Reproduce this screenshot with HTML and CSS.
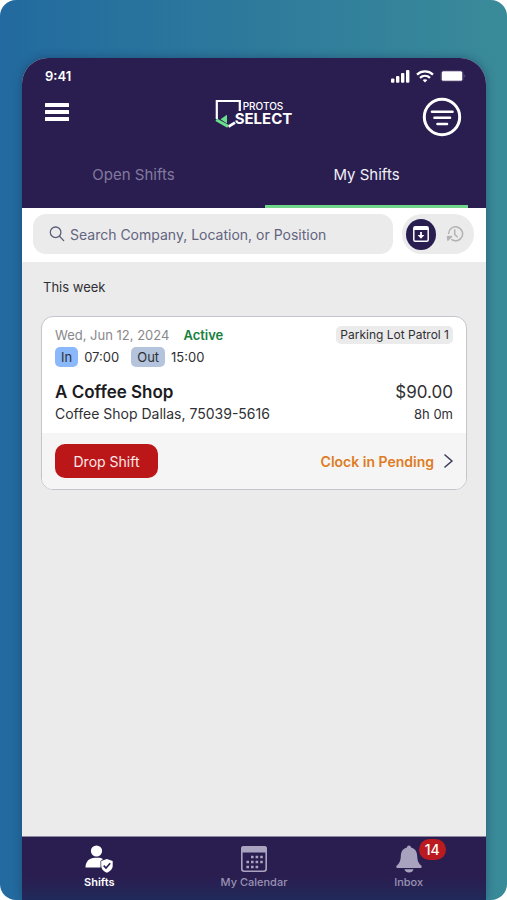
FILE: index.html
```html
<!DOCTYPE html>
<html lang="en">
<head>
<meta charset="utf-8">
<meta name="viewport" content="width=device-width, initial-scale=1">
<title>Protos Select – My Shifts</title>
<link rel="stylesheet" href="styles.css">
</head>
<body>
<div class="stage">
  <div class="phone">
    <header class="header">
      <div class="status">
        <span>9:41</span>
        <div class="status-icons">
          <svg width="19" height="13" viewBox="0 0 19 13" fill="#fff" aria-hidden="true"><rect x="0" y="8.500" width="3.400" height="4.300" rx="1"/><rect x="5" y="6" width="3.400" height="6.800" rx="1"/><rect x="10" y="3" width="3.400" height="9.800" rx="1"/><rect x="15" y="0" width="3.400" height="12.800" rx="1"/></svg>
          <svg width="18" height="13" viewBox="0 0 18 13" fill="none" stroke="#fff" stroke-width="2.300" aria-hidden="true"><path d="M1 4.600C5.500.4 12.500.4 17 4.600"/><path d="M4 7.800c2.900-2.600 7.100-2.600 10 0"/><path d="M6.600 10 9 12.600 11.400 10C10 8.900 8 8.900 6.600 10z" fill="#fff" stroke="none"/></svg>
          <svg width="26" height="12" viewBox="0 0 26 12" aria-hidden="true"><rect x=".5" y=".5" width="23" height="11" rx="3" fill="none" stroke="#3f3462"/><rect x="1.700" y="1.300" width="20.600" height="9.400" rx="1.500" fill="#fff"/><path d="M24.600 4.300q1.200 1.700 0 3.400z" fill="#8d87a1"/></svg>
        </div>
      </div>
      <div class="brand-bar">
        <button class="icon-button" aria-label="Menu"><svg width="24" height="18" viewBox="0 0 24 18" fill="#fff"><rect width="24" height="4" rx=".5"/><rect y="7" width="24" height="4" rx=".5"/><rect y="14" width="24" height="4" rx=".5"/></svg></button>
        <div class="brand">
          <svg width="26" height="30" viewBox="0 0 26 30" fill="none" aria-hidden="true"><path d="M1.800 20V2h23V12" stroke="#fff" stroke-width="2.200"/><path d="M13.500 27.600l6.500-4" stroke="#fff" stroke-width="2.800"/><path d="M1.200 20.800 13 27.400" stroke="#6be08c" stroke-width="3"/><path d="M12 15.800v8.600L5.500 20.200z" fill="#6be08c"/></svg>
          <div class="brand-name"><span class="brand-top">PROTOS</span><span class="brand-main">SELECT</span></div>
        </div>
        <button class="icon-button" aria-label="Filter"><svg width="40" height="40" viewBox="0 0 40 40" fill="none" stroke="#fff"><circle cx="20" cy="20" r="17.700" stroke-width="3"/><g stroke-width="2.600" stroke-linecap="round"><path d="M10 14.700h20.500M12.500 20.800h15.500M15.500 27h9.500"/></g></svg></button>
      </div>
      <nav class="tabs" aria-label="Shift lists">
        <a class="tab" href="#open">Open Shifts</a>
        <a class="tab tab-active" href="#mine" aria-current="page">My Shifts</a>
      </nav>
    </header>

    <div class="toolbar">
      <label class="search">
        <svg width="16" height="16" viewBox="0 0 16 16" fill="none" stroke="#5b5f78" stroke-width="1.300" stroke-linecap="round" aria-hidden="true"><circle cx="6.600" cy="6.300" r="5.300"/><path d="M10.500 10.300l4.200 4.300"/></svg>
        <input type="search" aria-label="Search shifts" placeholder="Search Company, Location, or Position">
      </label>
      <div class="view-switch">
        <button class="view view-active" aria-label="Upcoming"><svg width="16" height="16" viewBox="0 0 16 16" fill="none" stroke="#fff" stroke-width="1.500"><rect x=".8" y=".8" width="14.400" height="14.400" rx="1.500"/><path d="M1 2.500h14" stroke-width="3"/><path d="M8 6v4" stroke-width="1.800"/><path d="M4.600 8.900h6.800L8 12.700z" fill="#fff" stroke="none"/></svg></button>
        <button class="view" aria-label="History"><svg width="18" height="18" viewBox="0 0 18 18" fill="none" stroke="#b1b1b3" stroke-width="1.500" stroke-linecap="round" stroke-linejoin="round"><path d="M2.600 8.500a7 7 0 1 1 3.200 6.200"/><path d="M8.700 5v4.500l2.500 2.200"/><path d="M1.600 11.400h4.600l-4.200 4z" fill="#b1b1b3" stroke-width="1"/></svg></button>
      </div>
    </div>

    <main class="content">
      <h2 class="section-title">This week</h2>
      <article class="card">
        <div class="card-body">
          <div class="row">
            <div class="date-status"><span class="date">Wed, Jun 12, 2024</span><span class="active">Active</span></div>
            <span class="position">Parking Lot Patrol 1</span>
          </div>
          <div class="times">
            <span class="pill pill-in">In</span><span class="time">07:00</span>
            <span class="pill pill-out">Out</span><span class="time">15:00</span>
          </div>
          <div class="row headline"><h3 class="place">A Coffee Shop</h3><span class="pay">$90.00</span></div>
          <div class="row detail"><span class="address">Coffee Shop Dallas, 75039-5616</span><span>8h 0m</span></div>
        </div>
        <div class="card-footer">
          <button class="drop">Drop Shift</button>
          <a class="pending" href="#clock-in">Clock in Pending<svg width="9" height="14" viewBox="0 0 9 14" fill="none" stroke="#3c3c5c" stroke-width="1.600" stroke-linecap="round" stroke-linejoin="round" aria-hidden="true"><path d="M1 1l7 6-7 6"/></svg></a>
        </div>
      </article>
    </main>

    <nav class="bottom-nav" aria-label="Main">
      <a class="nav-item nav-current" href="#shifts" aria-current="page">
        <svg width="28" height="28" viewBox="0 0 28 28" fill="#fff" aria-hidden="true"><circle cx="11.500" cy="6" r="5.600"/><path d="M.5 22.500c0-6 4-9.700 9.500-9.700h3c2 0 3.700.5 5 1.300l-2.500 2v6.400z"/><path d="M21.800 14l5.900 2.100v4.600c0 3.200-2.600 5.600-5.900 7-3.300-1.400-5.600-3.800-5.600-7v-4.600z"/><path d="M18.700 20.600l2.300 2.500 4.200-4.800" fill="none" stroke="#2a1e50" stroke-width="1.600"/></svg>
        <span>Shifts</span>
      </a>
      <a class="nav-item" href="#calendar">
        <svg width="28" height="28" viewBox="0 0 28 28" aria-hidden="true"><rect x="1.800" y="1.800" width="24.400" height="24.400" rx="2.500" fill="none" stroke="#aaa4c0" stroke-width="1.600"/><path d="M1 7.500V4q0-3 3-3h20q3 0 3 3v3.500z" fill="#aaa4c0"/><g stroke="#aaa4c0" stroke-width="2.600" stroke-dasharray="2.600 2"><path d="M11 12h11.800M6.400 17h16.400M6.400 22h11.800"/></g></svg>
        <span>My Calendar</span>
      </a>
      <a class="nav-item" href="#inbox">
        <span class="bell"><svg width="28" height="28" viewBox="0 0 28 28" fill="#a8a2be" aria-hidden="true"><path d="M14 .5c1.200 0 2 .8 2 2 4.300 1 6 4.200 6.200 8.500.2 5 1.300 7.200 4 9.500 1 1 .6 2.500-.8 2.500H2.600c-1.400 0-1.800-1.500-.8-2.500 2.700-2.300 3.800-4.500 4-9.500C6 6.700 7.700 3.500 12 2.500c0-1.200.8-2 2-2z"/><path d="M9.500 24.300h9c-.6 2.100-2.300 3.200-4.500 3.200s-3.900-1.100-4.500-3.200z"/></svg><span class="badge">14</span></span>
        <span>Inbox</span>
      </a>
    </nav>
  </div>
</div>
</body>
</html>
```
FILE: styles.css
```css
* { box-sizing: border-box; }

body {
  margin: 0;
  background: #fff;
  font-family: Inter, "Liberation Sans", sans-serif;
  font-size: 13px;
  color: #303034;
}

button { border: 0; padding: 0; background: none; font: inherit; cursor: pointer; }
a { color: inherit; text-decoration: none; }
svg { display: block; flex: none; }
h2, h3 { margin: 0; }

.stage {
  display: flex;
  min-height: 100vh;
  padding: 58px 21px 0 22px;
  border-radius: 16px;
  background: linear-gradient(90deg, #226a9f, #2d7a9c 50%, #3a8b99);
}

.phone {
  flex: 1;
  min-width: 0;
  display: flex;
  flex-direction: column;
  border-radius: 26px 26px 0 0;
  overflow: hidden;
  background: #ebebeb;
  box-shadow: 0 0 10px rgba(20, 30, 70, 0.4);
}

.header { background: #2a1e50; color: #fff; }

.status {
  display: flex;
  justify-content: space-between;
  align-items: center;
  height: 36px;
  padding: 0 20px 0 23px;
  font-size: 13px;
  font-weight: 600;
}

.status-icons { display: flex; align-items: center; gap: 6px; }

.brand-bar {
  display: grid;
  grid-template-columns: 1fr auto 1fr;
  align-items: start;
  height: 50px;
  padding: 3px 24px 0 23px;
}

.icon-button:first-child { justify-self: start; padding-top: 6px; }
.icon-button:last-child { justify-self: end; }

.brand { display: flex; padding-top: 2px; }
.brand-name {
  display: flex;
  flex-direction: column;
  padding-top: 1px;
  margin-left: -6px;
}
.brand-top { padding-left: 8px; font-size: 10px; font-weight: 500; line-height: 12px; }
.brand-main { font-size: 15px; font-weight: 700; line-height: 13px; }

.tabs {
  display: grid;
  grid-template-columns: 1fr 1fr;
  column-gap: 30px;
  padding: 0 18px 0 10px;
}

.tab {
  height: 64px;
  padding-top: 20px;
  border-bottom: 3px solid transparent;
  color: #827a9e;
  font-size: 15px;
  line-height: 21px;
  text-align: center;
}
.tab-active { border-color: #70d68a; color: #f1eff6; }

.toolbar { display: flex; gap: 9px; padding: 6px 12px 8px 11px; background: #fff; }

.search {
  flex: 1;
  min-width: 0;
  display: flex;
  align-items: center;
  gap: 5px;
  height: 40px;
  padding: 0 16px;
  border-radius: 13px;
  background: #ebebeb;
}
.search input {
  flex: 1;
  min-width: 0;
  height: 18px;
  border: 0;
  padding: 0;
  outline: 0;
  background: none;
  font: inherit;
  font-size: 14px;
  color: #303034;
}
.search input::placeholder { color: #63647f; opacity: 1; }

.view-switch {
  display: flex;
  align-items: center;
  gap: 4px;
  padding: 0 4px;
  border-radius: 20px;
  background: #ebebeb;
}
.view { display: grid; place-items: center; width: 30px; height: 31px; border-radius: 50%; }
.view-active { background: #2a1e50; }

.content { flex: 1; padding: 15px 19px; }

.section-title { padding-left: 2px; font-size: 13px; font-weight: 400; line-height: 20px; }

.card {
  margin-top: 19px;
  border: 1px solid #c3c5cb;
  border-radius: 12px;
  overflow: hidden;
  background: #fff;
}
.card-body { padding: 8px 13px 9px; }

.row { display: flex; justify-content: space-between; align-items: center; line-height: 20px; }
.date-status { display: flex; gap: 14px; }
.date { color: #88888c; }
.active { color: #16803c; font-weight: 600; }
.position { padding: 0 4px; border-radius: 5px; background: #ebebeb; font-size: 12px; line-height: 18px; }

.times { display: flex; align-items: center; margin-top: 2px; line-height: 20px; }
.pill { padding: 0 6px; border-radius: 5px; }
.pill-in { background: #8ab8fb; }
.pill-out { background: #b4c4dd; }
.time { margin: 0 12px 0 6px; }

.headline { margin-top: 13px; line-height: 24px; font-size: 17px; }
.place { color: #1b1b1e; font-size: 17px; font-weight: 600; }
.address { font-size: 14px; }

.card-footer {
  display: flex;
  justify-content: space-between;
  align-items: center;
  height: 56px;
  padding: 0 13px;
  background: #f5f5f5;
}
.drop { width: 103px; height: 34px; border-radius: 10px; background: #bb1718; color: #fbe9e9; font-size: 14px; }
.pending { display: flex; align-items: center; gap: 10px; color: #de7c23; font-size: 14px; font-weight: 600; }

.bottom-nav {
  display: grid;
  grid-template-columns: repeat(3, 1fr);
  height: 64px;
  padding-top: 8px;
  border-top: 1px solid #8d88a2;
  background: linear-gradient(#2a1e50 65%, #202a5a);
  color: #9992b3;
}
.nav-item { display: flex; flex-direction: column; align-items: center; gap: 2px; font-size: 11px; font-weight: 500; line-height: 14px; }
.nav-current { color: #fff; font-weight: 600; }
.bell { position: relative; }
.badge {
  position: absolute;
  top: -6px;
  left: 24px;
  width: 27px;
  border-radius: 11px;
  background: #bb1b20;
  color: #fff;
  font-size: 14px;
  line-height: 21px;
  text-align: center;
}
```
